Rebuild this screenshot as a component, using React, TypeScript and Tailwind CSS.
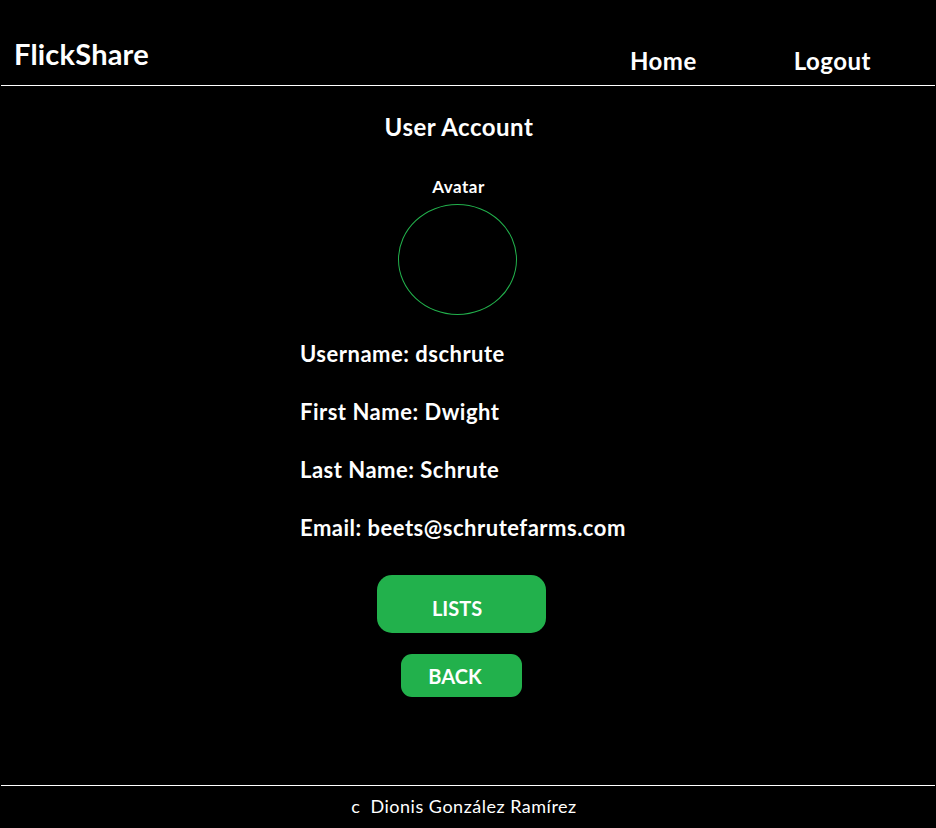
import React from "react";

export default function App() {
  const font = { fontFamily: "Lato, 'Open Sans', sans-serif" } as React.CSSProperties;
  return (
    <div className="w-[936px] h-[828px] bg-black text-white flex flex-col" style={font}>
      <header className="h-[86px] border-b border-white flex items-start pl-[13px] pr-[64px] mx-[1px]">
        <div className="text-[29px] font-bold mt-[36px] leading-[36px] tracking-[0.2px]">FlickShare</div>
        <nav className="ml-auto flex gap-[97px] mt-[45px]">
          <span className="text-[24px] font-bold leading-[32px] tracking-[0.5px]">Home</span>
          <span className="text-[24px] font-bold leading-[32px] tracking-[0.5px]">Logout</span>
        </nav>
      </header>
      <main className="flex-1 flex flex-col pr-[20px]">
        <h1 className="text-[24px] font-bold leading-[30px] mt-[26px] text-center pl-[2px] tracking-[0.5px]">User Account</h1>
        <div className="text-[17px] font-bold leading-[20px] mt-[35px] text-center pl-[1px] tracking-[0.5px]">Avatar</div>
        <div className="mt-[7px] flex justify-center">
          <div className="w-[119px] h-[111px] rounded-[50%] border border-[#22b14c] ml-[-2px]" />
        </div>
        <div className="pl-[300px] mt-[25px] flex flex-col gap-[30px] text-[22px] font-bold leading-[28px] tracking-[0.5px]">
          <div>Username: dschrute</div>
          <div>First Name: Dwight</div>
          <div>Last Name: Schrute</div>
          <div>Email: beets@schrutefarms.com</div>
        </div>
        <div className="flex flex-col items-center mt-[33px]">
          <button className="w-[169px] h-[58px] rounded-[15px] bg-[#22b14c] text-[20px] font-bold text-white ml-[7px] pr-[9px] pt-[7px]">
            LISTS
          </button>
          <button className="w-[121px] h-[43px] rounded-[11px] bg-[#22b14c] text-[20px] font-bold text-white mt-[21px] ml-[7px] pr-[13px] pt-[1px]">
            BACK
          </button>
        </div>
      </main>
      <footer className="h-[43px] border-t border-white mx-[1px] flex justify-center pt-[8px]">
        <span className="text-[18px] leading-[24px] pr-[8px] tracking-[0.5px]">c&nbsp;&nbsp;Dionis González Ramírez</span>
      </footer>
    </div>
  );
}
